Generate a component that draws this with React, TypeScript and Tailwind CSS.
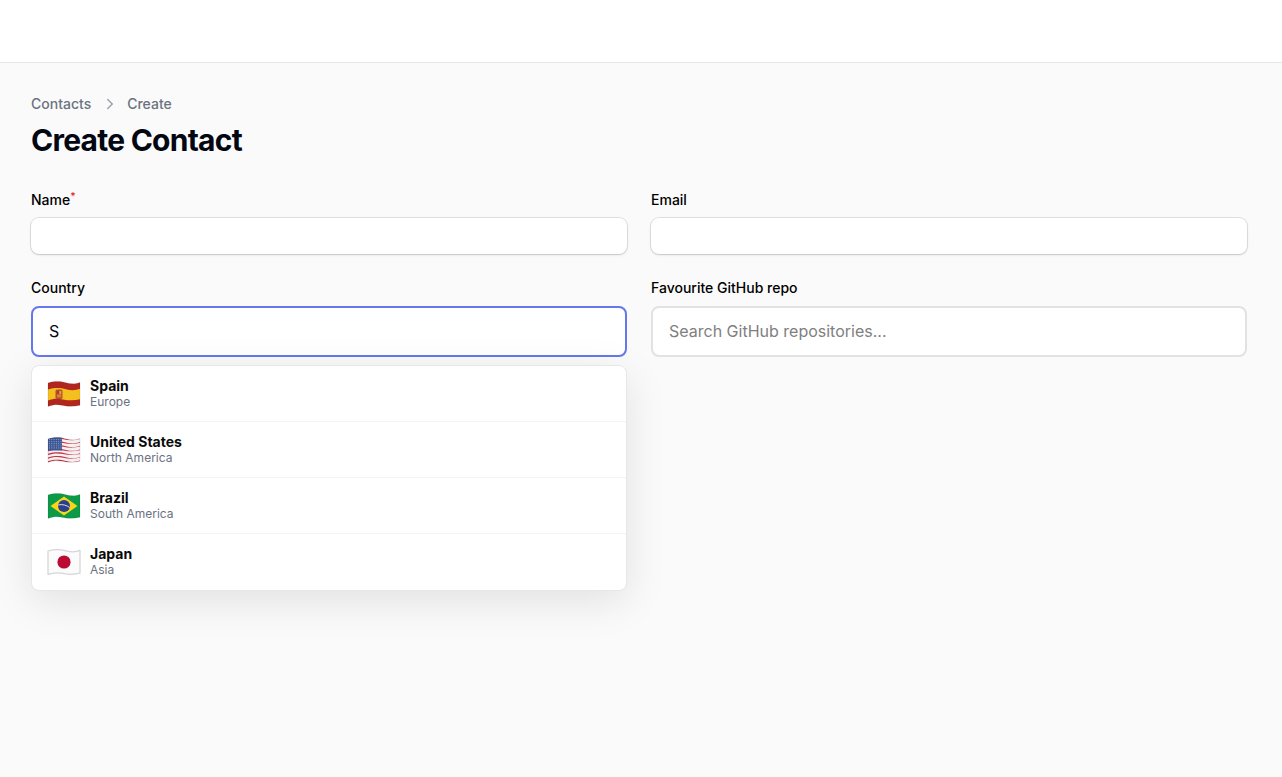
import React from "react";

const wave = (y1: number, y2: number) =>
  `M1 ${y1 + 1.2} C8 ${y1 - 1} 14 ${y1 - 0.4} 19 ${y1 + 1} S29 ${y1 + 2.2} 33 ${y1 + 0.6} V${y2 - 0.8} C27 ${y2 + 0.8} 22 ${y2 + 0.6} 16 ${y2 - 0.6} S6 ${y2 - 1.4} 1 ${y2 + 0.4} Z`;

function FlagShell({ id, children, frame }: { id: string; children: React.ReactNode; frame?: string }) {
  return (
    <svg width="34" height="28" viewBox="0 0 34 28" className="shrink-0">
      <defs>
        <clipPath id={id}>
          <path d={wave(1.8, 26)} />
        </clipPath>
      </defs>
      <g clipPath={`url(#${id})`}>{children}</g>
      <path
        d={wave(1.8, 26)}
        fill="none"
        stroke={frame ?? "#00000020"}
        strokeWidth={frame ? 1.3 : 0.7}
        strokeLinejoin="round"
      />
    </svg>
  );
}

function Spain() {
  return (
    <FlagShell id="es">
      <rect width="34" height="28" fill="#b1261f" />
      <path d={wave(8.2, 20)} fill="#f4c01e" />
      <rect x="8.5" y="9.5" width="7" height="9.5" rx="1.5" fill="#b3512b" />
      <rect x="10" y="11" width="2" height="3" fill="#c9302a" />
      <rect x="12.3" y="11" width="2" height="3" fill="#e0a040" />
      <rect x="10" y="14.4" width="4.3" height="3" fill="#d47f3a" />
    </FlagShell>
  );
}

function USA() {
  const ys = [1.8, 5.5, 9.2, 12.9, 16.6, 20.3, 24];
  return (
    <FlagShell id="us">
      <rect width="34" height="28" fill="#f5efef" />
      {ys.map((y) => (
        <path key={y} d={wave(y, y + 2.1)} fill="#c4354a" />
      ))}
      <rect x="0" y="0" width="15" height="14.5" fill="#3c5692" />
      <g fill="#8da0c8">
        {[2.5, 4.8, 7.1, 9.4, 11.7, 14].map((x) =>
          [3.5, 5.6, 7.7, 9.8, 11.9].map((y) => <circle key={`${x}-${y}`} cx={x} cy={y} r="0.6" />)
        )}
      </g>
    </FlagShell>
  );
}

function Brazil() {
  return (
    <FlagShell id="br">
      <rect width="34" height="28" fill="#0c9a48" />
      <path d="M17 4.5 L30.5 14 L17 23.5 L3.5 14 Z" fill="#f9d616" />
      <circle cx="17" cy="14" r="6" fill="#2b3f8c" />
      <path d="M11.2 13 C15 12 19.5 13 22.8 15.6" fill="none" stroke="#e8eef0" strokeWidth="0.9" />
    </FlagShell>
  );
}

function Japan() {
  return (
    <FlagShell id="jp" frame="#d6d6d6">
      <rect width="34" height="28" fill="#fbfbfb" />
      <circle cx="17" cy="14" r="6.6" fill="#bc0a33" />
    </FlagShell>
  );
}

const rows = [
  { name: "Spain", region: "Europe", Flag: Spain },
  { name: "United States", region: "North America", Flag: USA },
  { name: "Brazil", region: "South America", Flag: Brazil },
  { name: "Japan", region: "Asia", Flag: Japan },
];

export default function App() {
  return (
    <div className="min-h-[777px] bg-[#fafafa] font-['Inter',sans-serif] text-[#030712]">
      <header className="h-[63px] bg-white border-b border-[#e5e7eb]" />
      <main className="pl-[31px] pr-[35px] pt-[31px]">
        <nav className="flex items-center text-sm font-medium text-[#6b7280] h-[20px]">
          <span>Contacts</span>
          <svg width="20" height="20" viewBox="0 0 20 20" className="ml-[9px] mr-[7px]" fill="none" stroke="#9ca3af" strokeWidth="1.5">
            <path d="M7.75 5.5 L12.25 10 L7.75 14.5" strokeLinecap="round" strokeLinejoin="round" />
          </svg>
          <span>Create</span>
        </nav>
        <h1 className="mt-[8px] text-3xl leading-[36px] font-bold tracking-tight">Create Contact</h1>
        <div className="mt-[32px] grid grid-cols-2 gap-x-6">
          <div>
            <label className="block text-sm font-medium leading-[20px] text-black">
              Name<sup className="text-[#dc2626] font-medium">*</sup>
            </label>
            <input className="mt-2 block w-full h-9 rounded-lg bg-white ring-1 ring-[#03071219] shadow-sm outline-none" />
          </div>
          <div>
            <label className="block text-sm font-medium leading-[20px] text-black">Email</label>
            <input className="mt-2 block w-full h-9 rounded-lg bg-white ring-1 ring-[#03071219] shadow-sm outline-none" />
          </div>
          <div className="mt-6 relative">
            <label className="block text-sm font-medium leading-[20px] text-black">Country</label>
            <input
              readOnly
              value="S"
              className="mt-2 block w-full h-[51px] pb-[2px] rounded-lg bg-white border-2 border-[#6478ec] px-[16px] text-base text-[#030712] outline-none"
            />
            <ul className="absolute left-0 top-[87px] w-full bg-white rounded-lg border border-[#e5e7eb] shadow-[0_10px_40px_rgba(0,0,0,0.1)] overflow-hidden">
              {rows.map(({ name, region, Flag }, i) => (
                <li
                  key={name}
                  className={`flex items-center pl-[15px] gap-[9px] ${i === 0 ? "h-[55px]" : i === 3 ? "h-[57px] pb-px border-t border-[#f3f4f6]" : "h-[56px] border-t border-[#f3f4f6]"}`}
                >
                  <Flag />
                  <div className="flex flex-col">
                    <span className="text-sm font-bold leading-[16px] text-[#0a0a0a]">{name}</span>
                    <span className="text-xs leading-[16px] text-[#6b7280]">{region}</span>
                  </div>
                </li>
              ))}
            </ul>
          </div>
          <div className="mt-6">
            <label className="block text-sm font-medium leading-[20px] text-black">Favourite GitHub repo</label>
            <input
              readOnly
              placeholder="Search GitHub repositories..."
              className="mt-2 block w-full h-[51px] pb-[2px] rounded-lg bg-white border-2 border-[#e2e2e2] px-[16px] text-base outline-none placeholder:text-[#808080]"
            />
          </div>
        </div>
      </main>
    </div>
  );
}
